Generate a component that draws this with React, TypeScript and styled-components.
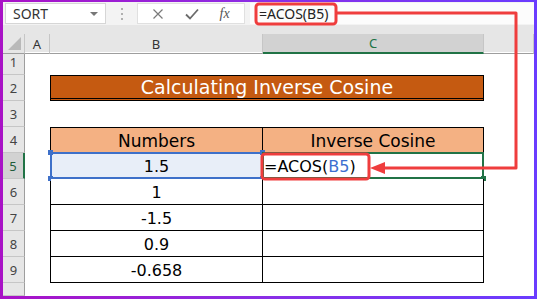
import React from "react";
import styled, { createGlobalStyle } from "styled-components";

const GlobalStyle = createGlobalStyle`
  html, body {
    margin: 0;
    padding: 0;
    background: #fff;
  }
  * {
    box-sizing: border-box;
  }
`;

const uiFont = `"Noto Sans", "Liberation Sans", sans-serif`;
const sheetFont = `"Comic Sans MS", "DejaVu Sans", sans-serif`;
const cols = `22px 25px 213px 221px 1fr`;

const Frame = styled.div`
  position: relative;
  width: 537px;
  height: 299px;
  padding: 2px 3px 3px 3px;
  background: linear-gradient(90deg, #a912c6 0%, #8a2ee6 50%, #6a3cff 100%);
`;

const Window = styled.div`
  height: 100%;
  display: flex;
  flex-direction: column;
  background: #fff;
  overflow: hidden;
  font-family: ${uiFont};
`;

const FormulaBar = styled.div`
  display: flex;
  height: 23px;
  padding: 1px 0 1px 2px;
  background: #f3f3f3;
`;

const NameBox = styled.div`
  width: 101px;
  display: flex;
  align-items: center;
  justify-content: space-between;
  padding: 0 7px 0 7px;
  background: #fff;
  border: 1px solid #d6d6d6;
  font-size: 14px;
  color: #333;
`;

const Caret = styled.span`
  width: 0;
  height: 0;
  border-left: 4px solid transparent;
  border-right: 4px solid transparent;
  border-top: 4px solid #777;
`;

const Grip = styled.div`
  width: 31px;
  display: flex;
  flex-direction: column;
  align-items: center;
  justify-content: center;
  gap: 3px;
`;

const Dot = styled.span`
  width: 2px;
  height: 2px;
  background: #b0b0b0;
`;

const Buttons = styled.div`
  width: 108px;
  display: flex;
  align-items: center;
  justify-content: space-around;
  padding: 0 4px;
  background: #fff;
  border: 1px solid #e0e0e0;
  color: #6b6b6b;
`;

const Fx = styled.span`
  font-family: "Liberation Serif", serif;
  font-style: italic;
  font-size: 14px;
  color: #555;
`;

const FormulaInput = styled.div`
  flex: 1;
  margin-left: 5px;
  display: flex;
  align-items: center;
  padding-left: 9px;
  background: #fcfcfc;
  font-size: 14px;
  color: #222;
`;

const Strip = styled.div`
  height: 9px;
  background: #e6e6e6;
`;

const HeaderRow = styled.div`
  display: grid;
  grid-template-columns: ${cols};
  height: 18px;
  background: #e6e6e6;
`;

const Corner = styled.div`
  position: relative;
  border-right: 1px solid #c6c6c6;
  border-bottom: 1px solid #9e9e9e;
  &::after {
    content: "";
    position: absolute;
    right: 3px;
    bottom: 3px;
    border-left: 13px solid transparent;
    border-bottom: 13px solid #b9b9b9;
  }
`;

const ColHead = styled.div<{ $active?: boolean }>`
  display: flex;
  align-items: center;
  justify-content: center;
  font-size: 13px;
  color: ${(p) => (p.$active ? "#217346" : "#333")};
  background: ${(p) => (p.$active ? "#d2d2d2" : "transparent")};
  border-right: 1px solid #c6c6c6;
  border-bottom: ${(p) => (p.$active ? "2px solid #217346" : "1px solid #9e9e9e")};
`;

const Body = styled.div`
  flex: 1;
  display: grid;
  grid-template-columns: ${cols};
  grid-template-rows: 23px repeat(8, 26px) 1fr;
`;

const RowHead = styled.div<{ $active?: boolean }>`
  grid-column: 1;
  display: flex;
  align-items: flex-end;
  justify-content: center;
  padding-bottom: 3px;
  font-size: 13px;
  color: ${(p) => (p.$active ? "#1f5c3a" : "#444")};
  background: ${(p) => (p.$active ? "#d2d2d2" : "#e6e6e6")};
  border-bottom: 1px solid #c6c6c6;
  border-right: ${(p) => (p.$active ? "2px solid #217346" : "1px solid #9e9e9e")};
`;

const Title = styled.div`
  grid-column: 3 / 5;
  grid-row: 2;
  display: flex;
  align-items: center;
  justify-content: center;
  background: #c55a11;
  border: 1px solid #000;
  border-bottom: 3px double #000;
  color: #fff;
  font-family: ${sheetFont};
  font-size: 19px;
`;

const Table = styled.div`
  grid-column: 3 / 5;
  grid-row: 4 / 10;
  display: grid;
  grid-template-columns: 212px 1fr;
  grid-template-rows: 25px repeat(5, 26px);
  border-left: 1px solid #000;
  border-top: 1px solid #000;
  font-family: ${sheetFont};
`;

const Cell = styled.div<{ $head?: boolean; $selected?: boolean; $editing?: boolean }>`
  position: relative;
  display: flex;
  align-items: center;
  justify-content: ${(p) => (p.$editing ? "flex-start" : "center")};
  padding-left: ${(p) => (p.$editing ? "1px" : "0")};
  padding-top: 2px;
  font-size: ${(p) => (p.$head ? "17px" : "16px")};
  color: #000;
  background: ${(p) => (p.$head ? "#f4b183" : p.$selected ? "#e8eef8" : "#fff")};
  border-right: 1px solid #000;
  border-bottom: 1px solid #000;
`;

const Ring = styled.span<{ $color: string }>`
  position: absolute;
  inset: -1px -1px -1px -1px;
  border: 2px solid ${(p) => p.$color};
  pointer-events: none;
`;

const Handle = styled.span<{ $color: string; $x: "left" | "right"; $y: "top" | "bottom" }>`
  position: absolute;
  width: 5px;
  height: 5px;
  background: ${(p) => p.$color};
  ${(p) => p.$x}: -3px;
  ${(p) => p.$y}: -3px;
`;

const Ref = styled.span`
  color: #3c6fd0;
`;

const Annotation = styled.svg`
  position: absolute;
  top: 0;
  left: 0;
  pointer-events: none;
`;

const rows = [1, 2, 3, 4, 5, 6, 7, 8, 9, 10];
const values = ["1.5", "1", "-1.5", "0.9", "-0.658"];
const blue = "#3e70c9";
const green = "#217346";

const App: React.FC = () => {
  return (
    <Frame>
      <GlobalStyle />
      <Window>
        <FormulaBar>
          <NameBox>
            SORT
            <Caret />
          </NameBox>
          <Grip>
            <Dot />
            <Dot />
            <Dot />
          </Grip>
          <Buttons>
            <svg width="12" height="12" viewBox="0 0 12 12">
              <path d="M1.5 1.5 L10.5 10.5 M10.5 1.5 L1.5 10.5" stroke="#7a7a7a" strokeWidth="1.2" fill="none" />
            </svg>
            <svg width="14" height="12" viewBox="0 0 14 12">
              <path d="M1 6.5 L5 10.5 L13 1.5" stroke="#6b6b6b" strokeWidth="1.8" fill="none" />
            </svg>
            <Fx>fx</Fx>
          </Buttons>
          <FormulaInput>=ACOS(B5)</FormulaInput>
        </FormulaBar>
        <Strip />
        <HeaderRow>
          <Corner />
          <ColHead>A</ColHead>
          <ColHead>B</ColHead>
          <ColHead $active>C</ColHead>
          <ColHead />
        </HeaderRow>
        <Body>
          {rows.map((r) => (
            <RowHead key={r} $active={r === 5}>
              {r < 10 ? r : ""}
            </RowHead>
          ))}
          <Title>Calculating Inverse Cosine</Title>
          <Table>
            <Cell $head>Numbers</Cell>
            <Cell $head>Inverse Cosine</Cell>
            {values.map((v, i) => (
              <React.Fragment key={v}>
                <Cell $selected={i === 0}>
                  {v}
                  {i === 0 && (
                    <>
                      <Ring $color={blue} />
                      <Handle $color={blue} $x="left" $y="top" />
                      <Handle $color={blue} $x="right" $y="top" />
                      <Handle $color={blue} $x="left" $y="bottom" />
                      <Handle $color={blue} $x="right" $y="bottom" />
                    </>
                  )}
                </Cell>
                <Cell $editing={i === 0}>
                  {i === 0 && (
                    <>
                      =ACOS(<Ref>B5</Ref>)
                      <Ring $color={green} />
                      <Handle $color={green} $x="right" $y="bottom" />
                    </>
                  )}
                </Cell>
              </React.Fragment>
            ))}
          </Table>
        </Body>
      </Window>
      <Annotation width="537" height="299" viewBox="0 0 537 299">
        <g stroke="#ef3d3d" strokeWidth="3" fill="none" strokeLinejoin="round">
          <rect x="256" y="4" width="80" height="20" rx="3" />
          <rect x="262" y="154" width="107" height="25" rx="3" />
          <path d="M336 13 H516 V168 H382" />
        </g>
        <polygon points="370,168 385,162 385,174" fill="#ef3d3d" />
      </Annotation>
    </Frame>
  );
};

export default App;
